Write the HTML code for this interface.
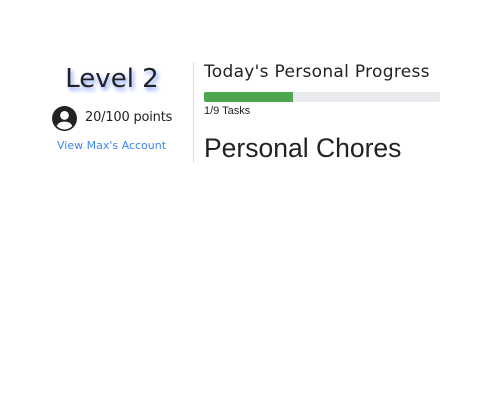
<!DOCTYPE html>
<html><head><style>
body{margin:0;width:500px;height:400px;background:#fff;position:relative;font-family:"DejaVu Sans",sans-serif;color:#222;}
.a{position:absolute;white-space:nowrap;}
</style></head><body>
<div class="a" style="left:0;width:224px;top:64px;text-align:center;font-size:26px;color:#222;text-shadow:2px 3px 4px #7d9cff;">Level 2</div>
<svg class="a" style="left:52px;top:106px" width="25" height="25" viewBox="0 0 24 24"><circle cx="12" cy="12" r="12" fill="#222"/><circle cx="12" cy="9" r="4.2" fill="#fff"/><path d="M4.5 19.2C6 16 9 15 12 15s6 1 7.5 4.2A10.5 10.5 0 0 1 12 22.5 10.5 10.5 0 0 1 4.5 19.2z" fill="#fff"/></svg>
<div class="a" style="left:85px;top:110px;font-size:13px;letter-spacing:-0.2px;">20/100 points</div>
<div class="a" style="left:57px;top:139px;font-size:11px;color:#3d86f5;">View Max's Account</div>
<div class="a" style="left:193px;top:62px;width:1px;height:101px;background:#ddd;"></div>
<div class="a" style="left:204px;top:62px;font-size:17px;letter-spacing:0.3px;">Today's Personal Progress</div>
<div class="a" style="left:204px;top:92px;width:236px;height:10px;background:#e9eaee;border-radius:2px;overflow:hidden;"><div style="width:89px;height:100%;background:#4ca64e;"></div></div>
<div class="a" style="left:204px;top:105px;font-family:'Liberation Sans',sans-serif;font-size:11px;">1/9 Tasks</div>
<div class="a" style="left:204px;top:133px;font-family:'Liberation Sans',sans-serif;font-size:26.5px;">Personal Chores</div>
</body></html>
